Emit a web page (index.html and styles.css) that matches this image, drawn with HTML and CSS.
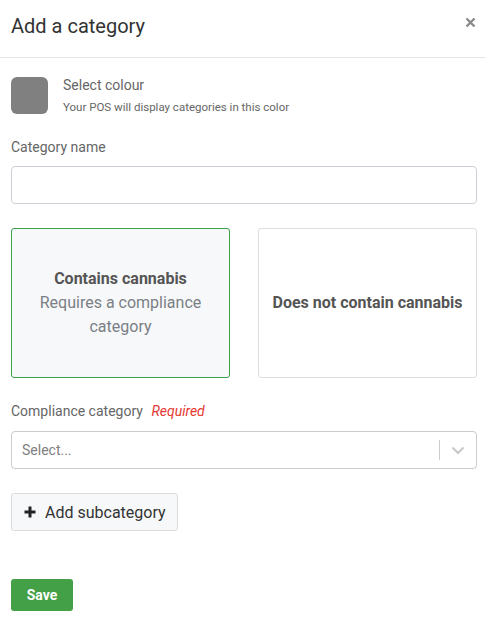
FILE: index.html
```html
<!DOCTYPE html>
<html>
<head>
<meta charset="utf-8">
<link rel="stylesheet" href="styles.css">
</head>
<body>
<div class="modal">
  <header class="modal-header">
    <h1 class="modal-title">Add a category</h1>
    <button class="close-btn" aria-label="Close">
      <svg width="11" height="11" viewBox="0 0 11 11"><path d="M1.5 1.5L9.5 9.5M9.5 1.5L1.5 9.5" stroke="#8a8a8a" stroke-width="2.4" stroke-linecap="butt"/></svg>
    </button>
  </header>
  <div class="modal-body">
    <div class="colour-row">
      <div class="swatch"></div>
      <div class="colour-text">
        <div class="colour-title">Select colour</div>
        <div class="colour-sub">Your POS will display categories in this color</div>
      </div>
    </div>

    <label class="field-label label-name">Category name</label>
    <input class="text-input" type="text">

    <div class="cards">
      <div class="card card-selected">
        <div class="card-title">Contains cannabis</div>
        <div class="card-sub">Requires a compliance category</div>
      </div>
      <div class="card">
        <div class="card-title">Does not contain cannabis</div>
      </div>
    </div>

    <label class="field-label label-compliance">Compliance category <span class="required">Required</span></label>
    <div class="select">
      <span class="select-placeholder">Select...</span>
      <span class="select-sep"></span>
      <span class="select-arrow">
        <svg width="14" height="9" viewBox="0 0 14 9"><path d="M1.5 1.5L7 7L12.5 1.5" fill="none" stroke="#c8c8c8" stroke-width="2"/></svg>
      </span>
    </div>

    <button class="add-btn">
      <svg width="12" height="12" viewBox="0 0 12 12"><path d="M6 0.5V11.5M0.5 6H11.5" stroke="#222" stroke-width="3"/></svg>
      <span>Add subcategory</span>
    </button>

    <button class="save-btn">Save</button>
  </div>
</div>
</body>
</html>
```
FILE: styles.css
```css
* { box-sizing: border-box; }
html, body { margin: 0; padding: 0; background: #fff; }
body { font-family: Roboto, "Noto Sans", Arial, sans-serif; color: #333; }

.modal { width: 486px; }

.modal-header {
  height: 58px;
  border-bottom: 1px solid #e6e6e6;
  display: flex;
  align-items: flex-start;
  justify-content: space-between;
  padding: 0 10px 0 11px;
}
.modal-title {
  margin: 14px 0 0 0;
  font-size: 20px;
  font-weight: 400;
  line-height: 24px;
  color: #333;
}
.close-btn {
  margin: 17px 0 0 0;
  padding: 0;
  border: 0;
  background: none;
  width: 11px;
  height: 11px;
  display: flex;
}

.modal-body {
  padding: 19px 9px 0 11px;
  display: flex;
  flex-direction: column;
  align-items: flex-start;
}

.colour-row { display: flex; gap: 15px; }
.swatch {
  width: 37px; height: 37px;
  background: #808080;
  border-radius: 6px;
}
.colour-title { font-size: 14px; color: #666; line-height: 16px; margin-top: 0; }
.colour-sub { font-size: 11.5px; color: #666; line-height: 14px; margin-top: 7px; }

.field-label {
  font-size: 14px;
  color: #666;
  line-height: 20px;
}
.label-name { margin-top: 23px; }
.text-input {
  margin-top: 9px;
  width: 100%;
  height: 38px;
  border: 1px solid #ccd0d6;
  border-radius: 4px;
  font: inherit;
}

.cards {
  margin-top: 24px;
  width: 100%;
  display: grid;
  grid-template-columns: 1fr 1fr;
  gap: 28px;
}
.card {
  height: 150px;
  border: 1px solid #dedede;
  border-radius: 3px;
  background: #fff;
  display: flex;
  flex-direction: column;
  justify-content: center;
  align-items: center;
  text-align: center;
  padding: 0 8px;
  line-height: 24px;
}
.card-selected { background: #f7f8fa; border-color: #3aa14a; padding: 0 20px; }
.card-title { font-size: 16px; font-weight: 700; color: #555; }
.card-sub { font-size: 16px; color: #7a7f85; }

.label-compliance { margin-top: 23px; }
.required { color: #e53935; font-style: italic; margin-left: 5px; }

.select {
  margin-top: 10px;
  width: 100%;
  height: 38px;
  border: 1px solid #ccc;
  border-radius: 4px;
  display: flex;
  align-items: center;
  padding-left: 10px;
}
.select-placeholder { flex: 1; font-size: 14px; color: #808080; }
.select-sep { width: 1px; height: 20px; background: #ccc; }
.select-arrow { width: 36px; display: flex; justify-content: center; align-items: center; }

.add-btn {
  margin-top: 24px;
  height: 38px;
  padding: 0 11px 0 12px;
  border: 1px solid #dcdcdc;
  border-radius: 3px;
  background: #f7f8fa;
  display: flex;
  align-items: center;
  gap: 9px;
  font-family: inherit;
  font-size: 16px;
  color: #333;
}

.save-btn {
  margin-top: 48px;
  height: 32px;
  width: 62px;
  border: 0;
  border-radius: 3px;
  background: #43a047;
  color: #fff;
  font-family: inherit;
  font-size: 14px;
  font-weight: 700;
}
```
